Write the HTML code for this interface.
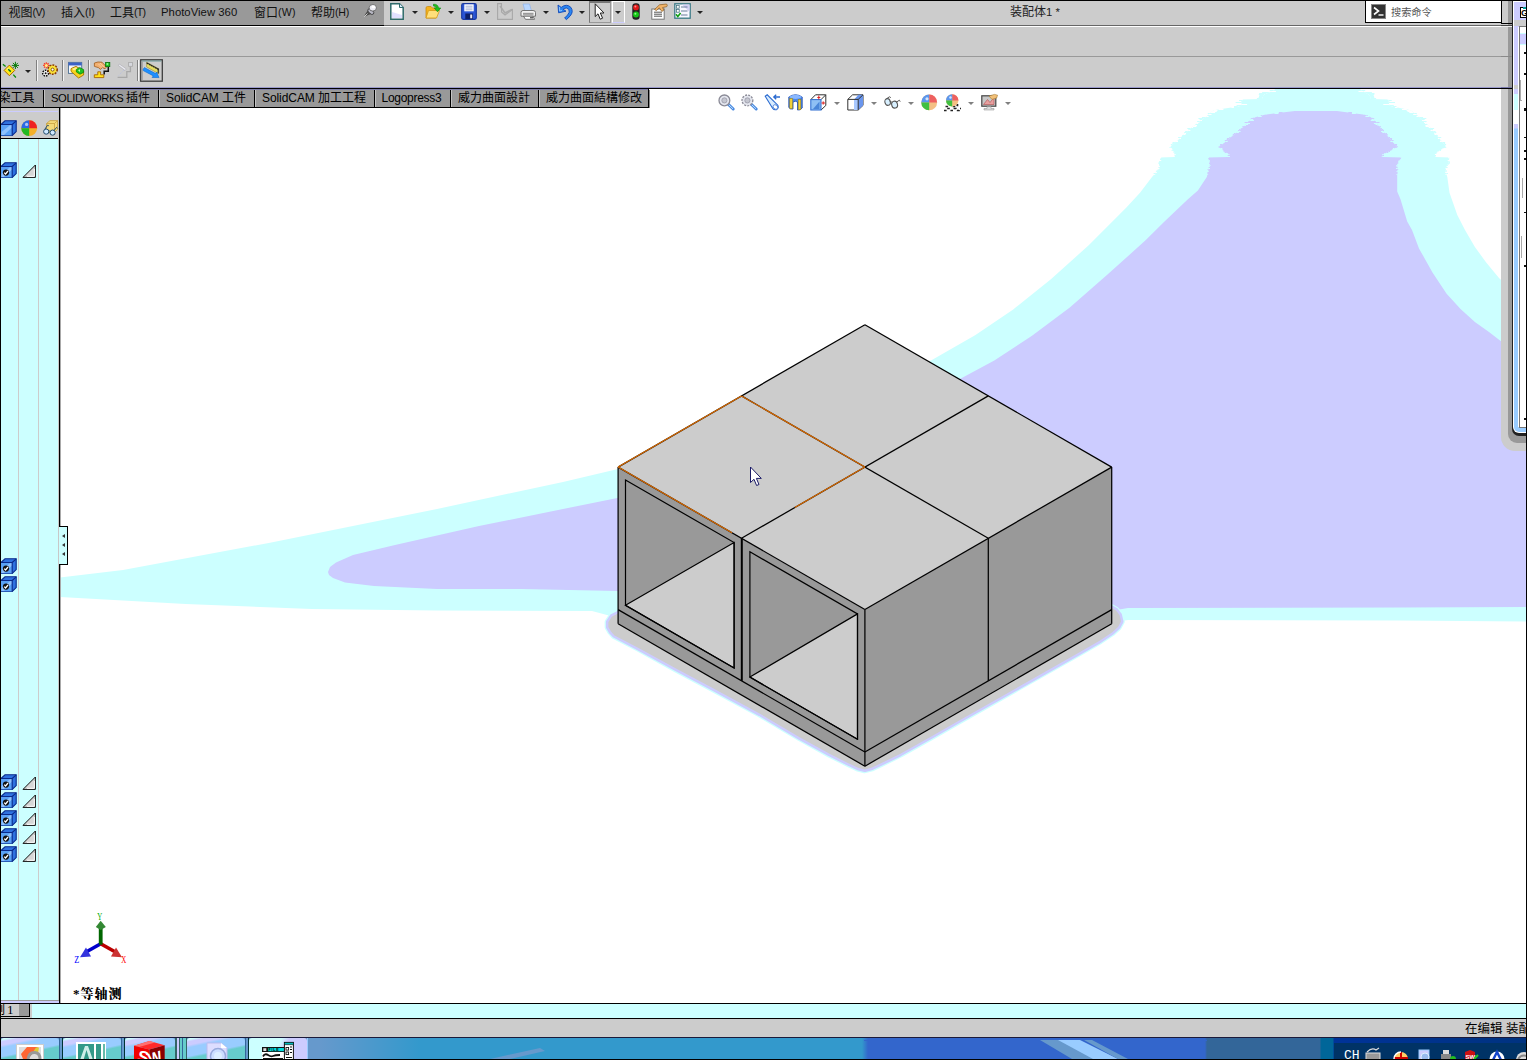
<!DOCTYPE html>
<html lang="zh"><head><meta charset="utf-8"><title>SOLIDWORKS</title><style>
html,body{margin:0;padding:0;background:#fff;}
body{width:1527px;height:1060px;overflow:hidden;position:relative;font-family:"Liberation Sans","Noto Sans CJK SC",sans-serif;font-size:12px;color:#000;}
.a{position:absolute;}
.t{position:absolute;white-space:nowrap;line-height:14px;height:14px;}
.la{font-size:11.3px;}
.ar{position:absolute;width:0;height:0;border-left:3px solid transparent;border-right:3px solid transparent;border-top:3px solid #222;}
.sep{position:absolute;width:1px;background:#808080;border-right:1px solid #f4f4f4;}
.ic{position:absolute;overflow:visible;}
</style></head><body>
<svg id="vp" width="1527" height="1060" viewBox="0 0 1527 1060" style="position:absolute;left:0;top:0" shape-rendering="geometricPrecision">
<polygon points="60.0,577.5 123.0,570.0 270.0,542.7 437.0,509.0 563.0,482.0 618.0,469.0 931.0,360.4 975.5,334.9 1013.2,309.4 1050.9,279.2 1088.7,245.3 1126.4,207.5 1140.0,192.7 1152.0,177.0 1160.0,168.0 1160.0,157.5 1174.5,157.0 1174.5,152.6 1170.0,147.0 1181.0,137.0 1191.0,128.0 1205.7,117.0 1213.5,110.3 1241.0,106.0 1242.4,99.5 1262.0,99.0 1263.6,94.7 1274.7,90.0 1274.7,89.0 1360.4,89.0 1360.4,90.0 1369.4,94.7 1371.0,99.0 1388.3,99.5 1389.4,105.8 1410.5,110.3 1419.5,117.0 1430.6,128.0 1438.4,137.0 1446.2,147.0 1436.0,152.6 1436.0,157.0 1449.5,157.5 1448.4,163.0 1445.0,169.3 1447.3,177.0 1449.5,192.7 1457.3,215.0 1465.0,230.0 1474.9,247.0 1486.2,262.5 1499.0,278.1 1527.0,305.0 1527.0,621.5 1400.0,620.5 1128.0,620.0 1000.0,640.0 700.0,640.0 592.0,611.0 437.0,610.6 311.5,609.0 185.7,604.0 60.0,597.0" fill="#ccffff"/>
<polygon points="328.0,572.0 330.0,567.0 336.0,562.5 353.0,555.0 395.0,545.0 479.0,526.0 563.0,509.0 617.4,498.0 961.3,378.3 994.3,360.4 1032.0,335.8 1069.8,307.5 1107.5,274.5 1145.3,240.6 1164.5,221.6 1187.9,199.3 1197.9,190.4 1206.8,177.0 1210.0,163.7 1208.0,157.5 1229.0,157.0 1229.0,154.8 1219.0,147.0 1231.3,137.0 1242.4,128.0 1252.4,118.0 1264.7,114.7 1294.8,111.0 1337.0,111.0 1364.9,114.7 1372.7,118.0 1380.5,128.0 1388.3,137.0 1397.2,147.0 1382.7,154.8 1382.7,157.0 1401.6,157.5 1397.2,163.7 1397.2,191.5 1400.5,199.3 1407.2,221.6 1412.0,230.0 1419.0,248.4 1432.5,272.5 1446.6,293.7 1460.8,309.3 1474.9,322.0 1489.0,332.0 1499.0,339.7 1527.0,360.0 1527.0,607.0 1400.0,607.5 1128.0,608.0 1000.0,630.0 700.0,630.0 617.4,591.0 521.0,589.0 437.0,589.0 374.0,586.0 345.0,582.5 333.0,578.0 329.0,575.0" fill="#ccccff"/>
<rect x="1269.7" y="90" width="3.8" height="1" fill="#ccffff"/>
<rect x="1361.4" y="90" width="3.8" height="1" fill="#ccffff"/>
<rect x="1271.2" y="91" width="4.7" height="1" fill="#ffffff"/>
<rect x="1358.5" y="91" width="4.7" height="1" fill="#ffffff"/>
<rect x="1262.1" y="92" width="6.7" height="1" fill="#ccffff"/>
<rect x="1365.2" y="92" width="6.7" height="1" fill="#ccffff"/>
<rect x="1259.1" y="93" width="7.4" height="1" fill="#ccffff"/>
<rect x="1367.1" y="93" width="7.4" height="1" fill="#ccffff"/>
<rect x="1258.8" y="94" width="5.3" height="1" fill="#ccffff"/>
<rect x="1369.0" y="94" width="5.3" height="1" fill="#ccffff"/>
<rect x="1259.3" y="95" width="4.0" height="1" fill="#ccffff"/>
<rect x="1369.7" y="95" width="4.0" height="1" fill="#ccffff"/>
<rect x="1259.0" y="96" width="4.0" height="1" fill="#ccffff"/>
<rect x="1370.1" y="96" width="4.0" height="1" fill="#ccffff"/>
<rect x="1258.6" y="97" width="3.9" height="1" fill="#ccffff"/>
<rect x="1370.4" y="97" width="3.9" height="1" fill="#ccffff"/>
<rect x="1256.9" y="98" width="5.3" height="1" fill="#ccffff"/>
<rect x="1370.8" y="98" width="5.3" height="1" fill="#ccffff"/>
<rect x="1242.4" y="99" width="0.6" height="1" fill="#ffffff"/>
<rect x="1387.7" y="99" width="0.6" height="1" fill="#ffffff"/>
<rect x="1239.0" y="100" width="3.2" height="1" fill="#ccffff"/>
<rect x="1388.5" y="100" width="3.2" height="1" fill="#ccffff"/>
<rect x="1241.3" y="101" width="0.7" height="1" fill="#ccffff"/>
<rect x="1388.6" y="101" width="0.7" height="1" fill="#ccffff"/>
<rect x="1235.6" y="102" width="6.2" height="1" fill="#ccffff"/>
<rect x="1388.8" y="102" width="6.2" height="1" fill="#ccffff"/>
<rect x="1241.5" y="103" width="-0.0" height="1" fill="#ffffff"/>
<rect x="1389.0" y="103" width="-0.0" height="1" fill="#ffffff"/>
<rect x="1241.3" y="104" width="5.8" height="1" fill="#ffffff"/>
<rect x="1383.3" y="104" width="5.8" height="1" fill="#ffffff"/>
<rect x="1236.6" y="105" width="4.5" height="1" fill="#ccffff"/>
<rect x="1389.3" y="105" width="4.5" height="1" fill="#ccffff"/>
<rect x="1234.0" y="106" width="3.8" height="1" fill="#ccffff"/>
<rect x="1392.7" y="106" width="3.8" height="1" fill="#ccffff"/>
<rect x="1231.4" y="107" width="2.5" height="1" fill="#ffffff"/>
<rect x="1394.9" y="107" width="2.5" height="1" fill="#ffffff"/>
<rect x="1224.9" y="108" width="0.1" height="1" fill="#ccffff"/>
<rect x="1402.1" y="108" width="0.1" height="1" fill="#ccffff"/>
<rect x="1218.6" y="109" width="4.8" height="1" fill="#ffffff"/>
<rect x="1402.0" y="109" width="4.8" height="1" fill="#ffffff"/>
<rect x="1213.3" y="110" width="4.2" height="1" fill="#ffffff"/>
<rect x="1406.6" y="110" width="4.2" height="1" fill="#ffffff"/>
<rect x="1212.1" y="111" width="4.6" height="1" fill="#ffffff"/>
<rect x="1407.5" y="111" width="4.6" height="1" fill="#ffffff"/>
<rect x="1210.9" y="112" width="4.2" height="1" fill="#ffffff"/>
<rect x="1409.3" y="112" width="4.2" height="1" fill="#ffffff"/>
<rect x="1207.8" y="113" width="2.0" height="1" fill="#ccffff"/>
<rect x="1414.8" y="113" width="2.0" height="1" fill="#ccffff"/>
<rect x="1208.6" y="114" width="2.9" height="1" fill="#ffffff"/>
<rect x="1413.2" y="114" width="2.9" height="1" fill="#ffffff"/>
<rect x="1207.4" y="115" width="-0.0" height="1" fill="#ffffff"/>
<rect x="1417.5" y="115" width="-0.0" height="1" fill="#ffffff"/>
<rect x="1206.3" y="116" width="2.3" height="1" fill="#ffffff"/>
<rect x="1416.5" y="116" width="2.3" height="1" fill="#ffffff"/>
<rect x="1201.9" y="117" width="3.1" height="1" fill="#ccffff"/>
<rect x="1420.0" y="117" width="3.1" height="1" fill="#ccffff"/>
<rect x="1198.4" y="118" width="5.3" height="1" fill="#ccffff"/>
<rect x="1421.0" y="118" width="5.3" height="1" fill="#ccffff"/>
<rect x="1199.6" y="119" width="2.7" height="1" fill="#ccffff"/>
<rect x="1422.0" y="119" width="2.7" height="1" fill="#ccffff"/>
<rect x="1201.0" y="120" width="1.0" height="1" fill="#ffffff"/>
<rect x="1422.1" y="120" width="1.0" height="1" fill="#ffffff"/>
<rect x="1197.1" y="121" width="2.6" height="1" fill="#ccffff"/>
<rect x="1424.0" y="121" width="2.6" height="1" fill="#ccffff"/>
<rect x="1198.3" y="122" width="1.1" height="1" fill="#ffffff"/>
<rect x="1424.0" y="122" width="1.1" height="1" fill="#ffffff"/>
<rect x="1197.0" y="123" width="1.2" height="1" fill="#ffffff"/>
<rect x="1424.9" y="123" width="1.2" height="1" fill="#ffffff"/>
<rect x="1195.4" y="124" width="0.3" height="1" fill="#ccffff"/>
<rect x="1427.1" y="124" width="0.3" height="1" fill="#ccffff"/>
<rect x="1194.3" y="125" width="2.7" height="1" fill="#ffffff"/>
<rect x="1425.4" y="125" width="2.7" height="1" fill="#ffffff"/>
<rect x="1193.0" y="126" width="3.4" height="1" fill="#ffffff"/>
<rect x="1425.6" y="126" width="3.4" height="1" fill="#ffffff"/>
<rect x="1191.7" y="127" width="1.4" height="1" fill="#ffffff"/>
<rect x="1428.7" y="127" width="1.4" height="1" fill="#ffffff"/>
<rect x="1187.3" y="128" width="3.1" height="1" fill="#ccffff"/>
<rect x="1431.0" y="128" width="3.1" height="1" fill="#ccffff"/>
<rect x="1188.4" y="129" width="1.0" height="1" fill="#ccffff"/>
<rect x="1431.9" y="129" width="1.0" height="1" fill="#ccffff"/>
<rect x="1188.2" y="130" width="2.2" height="1" fill="#ffffff"/>
<rect x="1430.6" y="130" width="2.2" height="1" fill="#ffffff"/>
<rect x="1185.1" y="131" width="2.0" height="1" fill="#ccffff"/>
<rect x="1433.6" y="131" width="2.0" height="1" fill="#ccffff"/>
<rect x="1184.2" y="132" width="1.8" height="1" fill="#ccffff"/>
<rect x="1434.5" y="132" width="1.8" height="1" fill="#ccffff"/>
<rect x="1184.9" y="133" width="1.1" height="1" fill="#ffffff"/>
<rect x="1434.3" y="133" width="1.1" height="1" fill="#ffffff"/>
<rect x="1183.8" y="134" width="1.7" height="1" fill="#ffffff"/>
<rect x="1434.5" y="134" width="1.7" height="1" fill="#ffffff"/>
<rect x="1182.0" y="135" width="0.7" height="1" fill="#ccffff"/>
<rect x="1437.1" y="135" width="0.7" height="1" fill="#ccffff"/>
<rect x="1181.6" y="136" width="0.2" height="1" fill="#ffffff"/>
<rect x="1437.8" y="136" width="0.2" height="1" fill="#ffffff"/>
<rect x="1178.1" y="137" width="2.4" height="1" fill="#ccffff"/>
<rect x="1438.8" y="137" width="2.4" height="1" fill="#ccffff"/>
<rect x="1179.3" y="138" width="1.7" height="1" fill="#ffffff"/>
<rect x="1437.9" y="138" width="1.7" height="1" fill="#ffffff"/>
<rect x="1178.2" y="139" width="0.4" height="1" fill="#ffffff"/>
<rect x="1440.0" y="139" width="0.4" height="1" fill="#ffffff"/>
<rect x="1177.2" y="140" width="0.6" height="1" fill="#ffffff"/>
<rect x="1440.5" y="140" width="0.6" height="1" fill="#ffffff"/>
<rect x="1176.0" y="141" width="2.0" height="1" fill="#ffffff"/>
<rect x="1439.9" y="141" width="2.0" height="1" fill="#ffffff"/>
<rect x="1172.5" y="142" width="2.4" height="1" fill="#ccffff"/>
<rect x="1442.7" y="142" width="2.4" height="1" fill="#ccffff"/>
<rect x="1172.3" y="143" width="1.6" height="1" fill="#ccffff"/>
<rect x="1443.5" y="143" width="1.6" height="1" fill="#ccffff"/>
<rect x="1170.8" y="144" width="1.9" height="1" fill="#ccffff"/>
<rect x="1444.2" y="144" width="1.9" height="1" fill="#ccffff"/>
<rect x="1171.3" y="145" width="0.3" height="1" fill="#ccffff"/>
<rect x="1445.0" y="145" width="0.3" height="1" fill="#ccffff"/>
<rect x="1170.5" y="146" width="0.4" height="1" fill="#ffffff"/>
<rect x="1445.4" y="146" width="0.4" height="1" fill="#ffffff"/>
<rect x="1169.5" y="147" width="0.9" height="1" fill="#ccffff"/>
<rect x="1445.3" y="147" width="0.9" height="1" fill="#ccffff"/>
<rect x="1171.2" y="148" width="0.9" height="1" fill="#ffffff"/>
<rect x="1442.6" y="148" width="0.9" height="1" fill="#ffffff"/>
<rect x="1172.0" y="149" width="0.3" height="1" fill="#ffffff"/>
<rect x="1441.3" y="149" width="0.3" height="1" fill="#ffffff"/>
<rect x="1171.6" y="150" width="1.2" height="1" fill="#ccffff"/>
<rect x="1439.8" y="150" width="1.2" height="1" fill="#ccffff"/>
<rect x="1173.3" y="151" width="0.3" height="1" fill="#ccffff"/>
<rect x="1438.0" y="151" width="0.3" height="1" fill="#ccffff"/>
<rect x="1173.5" y="152" width="1.0" height="1" fill="#ccffff"/>
<rect x="1436.2" y="152" width="1.0" height="1" fill="#ccffff"/>
<rect x="1174.0" y="153" width="0.5" height="1" fill="#ccffff"/>
<rect x="1436.0" y="153" width="0.5" height="1" fill="#ccffff"/>
<rect x="1174.5" y="154" width="1.1" height="1" fill="#ffffff"/>
<rect x="1434.9" y="154" width="1.1" height="1" fill="#ffffff"/>
<rect x="1174.5" y="155" width="-0.0" height="1" fill="#ffffff"/>
<rect x="1436.0" y="155" width="-0.0" height="1" fill="#ffffff"/>
<rect x="1174.5" y="156" width="0.5" height="1" fill="#ffffff"/>
<rect x="1435.5" y="156" width="0.5" height="1" fill="#ffffff"/>
<rect x="1160.0" y="157" width="1.2" height="1" fill="#ffffff"/>
<rect x="1448.3" y="157" width="1.2" height="1" fill="#ffffff"/>
<rect x="1160.0" y="158" width="0.5" height="1" fill="#ffffff"/>
<rect x="1448.8" y="158" width="0.5" height="1" fill="#ffffff"/>
<rect x="1160.0" y="159" width="0.0" height="1" fill="#ccffff"/>
<rect x="1449.1" y="159" width="0.0" height="1" fill="#ccffff"/>
<rect x="1160.0" y="160" width="1.2" height="1" fill="#ffffff"/>
<rect x="1447.7" y="160" width="1.2" height="1" fill="#ffffff"/>
<rect x="1159.1" y="161" width="0.9" height="1" fill="#ccffff"/>
<rect x="1448.7" y="161" width="0.9" height="1" fill="#ccffff"/>
<rect x="1158.6" y="162" width="1.4" height="1" fill="#ccffff"/>
<rect x="1448.5" y="162" width="1.4" height="1" fill="#ccffff"/>
<rect x="1158.4" y="163" width="1.6" height="1" fill="#ccffff"/>
<rect x="1448.1" y="163" width="1.6" height="1" fill="#ccffff"/>
<rect x="1159.0" y="164" width="1.0" height="1" fill="#ccffff"/>
<rect x="1447.6" y="164" width="1.0" height="1" fill="#ccffff"/>
<rect x="1159.2" y="165" width="0.8" height="1" fill="#ccffff"/>
<rect x="1447.1" y="165" width="0.8" height="1" fill="#ccffff"/>
<rect x="1159.9" y="166" width="0.1" height="1" fill="#ccffff"/>
<rect x="1446.5" y="166" width="0.1" height="1" fill="#ccffff"/>
<rect x="1158.4" y="167" width="1.6" height="1" fill="#ccffff"/>
<rect x="1446.0" y="167" width="1.6" height="1" fill="#ccffff"/>
<rect x="1159.4" y="168" width="0.2" height="1" fill="#ccffff"/>
<rect x="1445.4" y="168" width="0.2" height="1" fill="#ccffff"/>
<rect x="1157.7" y="169" width="0.9" height="1" fill="#ccffff"/>
<rect x="1445.1" y="169" width="0.9" height="1" fill="#ccffff"/>
<rect x="1156.6" y="170" width="1.2" height="1" fill="#ccffff"/>
<rect x="1445.4" y="170" width="1.2" height="1" fill="#ccffff"/>
<rect x="1155.9" y="171" width="1.0" height="1" fill="#ccffff"/>
<rect x="1445.7" y="171" width="1.0" height="1" fill="#ccffff"/>
<rect x="1156.0" y="172" width="0.8" height="1" fill="#ffffff"/>
<rect x="1445.1" y="172" width="0.8" height="1" fill="#ffffff"/>
<rect x="1153.6" y="173" width="1.6" height="1" fill="#ccffff"/>
<rect x="1446.3" y="173" width="1.6" height="1" fill="#ccffff"/>
<rect x="1154.2" y="174" width="1.0" height="1" fill="#ffffff"/>
<rect x="1445.5" y="174" width="1.0" height="1" fill="#ffffff"/>
<rect x="1278.9" y="112" width="3.7" height="1" fill="#ccccff"/>
<rect x="1348.3" y="112" width="3.7" height="1" fill="#ccccff"/>
<rect x="1274.5" y="113" width="4.0" height="1" fill="#ccffff"/>
<rect x="1351.9" y="113" width="4.0" height="1" fill="#ccffff"/>
<rect x="1266.3" y="114" width="0.2" height="1" fill="#ccffff"/>
<rect x="1363.2" y="114" width="0.2" height="1" fill="#ccffff"/>
<rect x="1260.9" y="115" width="0.8" height="1" fill="#ccccff"/>
<rect x="1366.8" y="115" width="0.8" height="1" fill="#ccccff"/>
<rect x="1258.0" y="116" width="3.7" height="1" fill="#ccffff"/>
<rect x="1365.4" y="116" width="3.7" height="1" fill="#ccffff"/>
<rect x="1254.3" y="117" width="0.5" height="1" fill="#ccffff"/>
<rect x="1371.0" y="117" width="0.5" height="1" fill="#ccffff"/>
<rect x="1250.8" y="118" width="1.1" height="1" fill="#ccccff"/>
<rect x="1373.1" y="118" width="1.1" height="1" fill="#ccccff"/>
<rect x="1250.9" y="119" width="2.3" height="1" fill="#ccffff"/>
<rect x="1371.5" y="119" width="2.3" height="1" fill="#ccffff"/>
<rect x="1249.9" y="120" width="4.0" height="1" fill="#ccffff"/>
<rect x="1370.7" y="120" width="4.0" height="1" fill="#ccffff"/>
<rect x="1248.3" y="121" width="0.6" height="1" fill="#ccccff"/>
<rect x="1375.4" y="121" width="0.6" height="1" fill="#ccccff"/>
<rect x="1244.6" y="122" width="3.3" height="1" fill="#ccccff"/>
<rect x="1376.2" y="122" width="3.3" height="1" fill="#ccccff"/>
<rect x="1246.9" y="123" width="3.1" height="1" fill="#ccffff"/>
<rect x="1373.9" y="123" width="3.1" height="1" fill="#ccffff"/>
<rect x="1245.9" y="124" width="2.2" height="1" fill="#ccffff"/>
<rect x="1375.5" y="124" width="2.2" height="1" fill="#ccffff"/>
<rect x="1244.9" y="125" width="1.0" height="1" fill="#ccffff"/>
<rect x="1377.5" y="125" width="1.0" height="1" fill="#ccffff"/>
<rect x="1242.4" y="126" width="1.5" height="1" fill="#ccccff"/>
<rect x="1379.3" y="126" width="1.5" height="1" fill="#ccccff"/>
<rect x="1242.6" y="127" width="0.3" height="1" fill="#ccccff"/>
<rect x="1380.1" y="127" width="0.3" height="1" fill="#ccccff"/>
<rect x="1240.8" y="128" width="1.0" height="1" fill="#ccccff"/>
<rect x="1380.9" y="128" width="1.0" height="1" fill="#ccccff"/>
<rect x="1239.1" y="129" width="1.4" height="1" fill="#ccccff"/>
<rect x="1381.8" y="129" width="1.4" height="1" fill="#ccccff"/>
<rect x="1238.1" y="130" width="1.2" height="1" fill="#ccccff"/>
<rect x="1382.7" y="130" width="1.2" height="1" fill="#ccccff"/>
<rect x="1238.1" y="131" width="2.5" height="1" fill="#ccffff"/>
<rect x="1381.0" y="131" width="2.5" height="1" fill="#ccffff"/>
<rect x="1236.8" y="132" width="2.1" height="1" fill="#ccffff"/>
<rect x="1382.3" y="132" width="2.1" height="1" fill="#ccffff"/>
<rect x="1233.9" y="133" width="1.7" height="1" fill="#ccccff"/>
<rect x="1385.3" y="133" width="1.7" height="1" fill="#ccccff"/>
<rect x="1232.8" y="134" width="1.6" height="1" fill="#ccccff"/>
<rect x="1386.1" y="134" width="1.6" height="1" fill="#ccccff"/>
<rect x="1232.7" y="135" width="0.5" height="1" fill="#ccccff"/>
<rect x="1387.0" y="135" width="0.5" height="1" fill="#ccccff"/>
<rect x="1231.7" y="136" width="0.2" height="1" fill="#ccccff"/>
<rect x="1387.9" y="136" width="0.2" height="1" fill="#ccccff"/>
<rect x="1229.3" y="137" width="1.3" height="1" fill="#ccccff"/>
<rect x="1388.7" y="137" width="1.3" height="1" fill="#ccccff"/>
<rect x="1226.9" y="138" width="2.5" height="1" fill="#ccccff"/>
<rect x="1389.6" y="138" width="2.5" height="1" fill="#ccccff"/>
<rect x="1226.7" y="139" width="1.5" height="1" fill="#ccccff"/>
<rect x="1390.5" y="139" width="1.5" height="1" fill="#ccccff"/>
<rect x="1224.8" y="140" width="2.2" height="1" fill="#ccccff"/>
<rect x="1391.4" y="140" width="2.2" height="1" fill="#ccccff"/>
<rect x="1225.8" y="141" width="1.9" height="1" fill="#ccffff"/>
<rect x="1390.4" y="141" width="1.9" height="1" fill="#ccffff"/>
<rect x="1224.5" y="142" width="0.3" height="1" fill="#ccffff"/>
<rect x="1392.9" y="142" width="0.3" height="1" fill="#ccffff"/>
<rect x="1223.3" y="143" width="0.1" height="1" fill="#ccffff"/>
<rect x="1394.0" y="143" width="0.1" height="1" fill="#ccffff"/>
<rect x="1220.0" y="144" width="2.1" height="1" fill="#ccccff"/>
<rect x="1395.0" y="144" width="2.1" height="1" fill="#ccccff"/>
<rect x="1219.9" y="145" width="0.9" height="1" fill="#ccccff"/>
<rect x="1395.9" y="145" width="0.9" height="1" fill="#ccccff"/>
<rect x="1218.7" y="146" width="0.9" height="1" fill="#ccccff"/>
<rect x="1396.8" y="146" width="0.9" height="1" fill="#ccccff"/>
<rect x="1218.7" y="147" width="0.9" height="1" fill="#ccccff"/>
<rect x="1396.3" y="147" width="0.9" height="1" fill="#ccccff"/>
<rect x="1220.9" y="148" width="1.5" height="1" fill="#ccffff"/>
<rect x="1392.9" y="148" width="1.5" height="1" fill="#ccffff"/>
<rect x="1222.2" y="149" width="0.4" height="1" fill="#ccffff"/>
<rect x="1392.2" y="149" width="0.4" height="1" fill="#ccffff"/>
<rect x="1222.9" y="150" width="0.5" height="1" fill="#ccccff"/>
<rect x="1390.7" y="150" width="0.5" height="1" fill="#ccccff"/>
<rect x="1223.6" y="151" width="1.2" height="1" fill="#ccccff"/>
<rect x="1388.8" y="151" width="1.2" height="1" fill="#ccccff"/>
<rect x="1224.7" y="152" width="1.3" height="1" fill="#ccccff"/>
<rect x="1387.0" y="152" width="1.3" height="1" fill="#ccccff"/>
<rect x="1227.3" y="153" width="0.8" height="1" fill="#ccffff"/>
<rect x="1384.3" y="153" width="0.8" height="1" fill="#ccffff"/>
<rect x="1228.6" y="154" width="0.9" height="1" fill="#ccffff"/>
<rect x="1382.3" y="154" width="0.9" height="1" fill="#ccffff"/>
<rect x="1227.7" y="155" width="1.3" height="1" fill="#ccccff"/>
<rect x="1382.7" y="155" width="1.3" height="1" fill="#ccccff"/>
<rect x="1229.0" y="156" width="0.9" height="1" fill="#ccffff"/>
<rect x="1381.8" y="156" width="0.9" height="1" fill="#ccffff"/>
<rect x="1208.0" y="157" width="0.9" height="1" fill="#ccffff"/>
<rect x="1400.7" y="157" width="0.9" height="1" fill="#ccffff"/>
<rect x="1208.2" y="158" width="0.1" height="1" fill="#ccccff"/>
<rect x="1400.9" y="158" width="0.1" height="1" fill="#ccccff"/>
<rect x="1208.6" y="159" width="0.2" height="1" fill="#ccffff"/>
<rect x="1399.9" y="159" width="0.2" height="1" fill="#ccffff"/>
<rect x="1209.0" y="160" width="0.8" height="1" fill="#ccffff"/>
<rect x="1398.7" y="160" width="0.8" height="1" fill="#ccffff"/>
<rect x="1209.3" y="161" width="0.7" height="1" fill="#ccffff"/>
<rect x="1398.1" y="161" width="0.7" height="1" fill="#ccffff"/>
<rect x="1209.6" y="162" width="0.1" height="1" fill="#ccccff"/>
<rect x="1398.1" y="162" width="0.1" height="1" fill="#ccccff"/>
<rect x="1209.0" y="163" width="0.9" height="1" fill="#ccccff"/>
<rect x="1397.3" y="163" width="0.9" height="1" fill="#ccccff"/>
<rect x="1209.8" y="164" width="0.1" height="1" fill="#ccffff"/>
<rect x="1397.0" y="164" width="0.1" height="1" fill="#ccffff"/>
<rect x="1209.6" y="165" width="0.9" height="1" fill="#ccffff"/>
<rect x="1396.3" y="165" width="0.9" height="1" fill="#ccffff"/>
<rect x="1209.3" y="166" width="0.7" height="1" fill="#ccffff"/>
<rect x="1396.5" y="166" width="0.7" height="1" fill="#ccffff"/>
<rect x="1208.6" y="167" width="0.5" height="1" fill="#ccccff"/>
<rect x="1397.2" y="167" width="0.5" height="1" fill="#ccccff"/>
<rect x="1208.8" y="168" width="1.2" height="1" fill="#ccffff"/>
<rect x="1396.0" y="168" width="1.2" height="1" fill="#ccffff"/>
<rect x="1207.6" y="169" width="1.0" height="1" fill="#ccccff"/>
<rect x="1397.2" y="169" width="1.0" height="1" fill="#ccccff"/>
<rect x="1208.2" y="170" width="0.2" height="1" fill="#ccccff"/>
<rect x="1397.2" y="170" width="0.2" height="1" fill="#ccccff"/>
<rect x="1208.1" y="171" width="0.7" height="1" fill="#ccffff"/>
<rect x="1396.5" y="171" width="0.7" height="1" fill="#ccffff"/>
<rect x="1207.3" y="172" width="0.5" height="1" fill="#ccccff"/>
<rect x="1397.2" y="172" width="0.5" height="1" fill="#ccccff"/>
<rect x="1207.2" y="173" width="0.4" height="1" fill="#ccccff"/>
<rect x="1397.2" y="173" width="0.4" height="1" fill="#ccccff"/>
<rect x="1207.4" y="174" width="0.7" height="1" fill="#ccffff"/>
<rect x="1396.5" y="174" width="0.7" height="1" fill="#ccffff"/>
<polygon points="640.0,600.0 618.0,613.5 612.0,616.5 608.4,622.0 608.4,627.0 611.0,631.5 614.5,635.4 639.0,648.2 676.0,668.6 712.6,688.1 760.0,713.7 800.0,737.5 830.0,754.1 850.0,764.1 858.0,767.8 864.9,769.5 872.0,767.6 880.0,763.8 900.0,753.9 933.0,735.4 957.0,721.7 1080.0,652.0 1100.0,640.5 1112.0,632.5 1118.0,627.0 1121.0,621.5 1119.5,615.0 1116.0,610.5 1111.7,608.0 1090.0,600.0" fill="#ccffff" stroke="#ccffff" stroke-width="7.5" stroke-linejoin="round"/>
<polygon points="640.0,600.0 618.0,613.5 612.0,616.5 608.4,622.0 608.4,627.0 611.0,631.5 614.5,635.4 639.0,648.2 676.0,668.6 712.6,688.1 760.0,713.7 800.0,737.5 830.0,754.1 850.0,764.1 858.0,767.8 864.9,769.5 872.0,767.6 880.0,763.8 900.0,753.9 933.0,735.4 957.0,721.7 1080.0,652.0 1100.0,640.5 1112.0,632.5 1118.0,627.0 1121.0,621.5 1119.5,615.0 1116.0,610.5 1111.7,608.0 1090.0,600.0" fill="#ccccff" stroke="#ccccff" stroke-width="5" stroke-linejoin="round"/>
<polygon points="640.0,600.0 618.0,613.5 612.0,616.5 608.4,622.0 608.4,627.0 611.0,631.5 614.5,635.4 639.0,648.2 676.0,668.6 712.6,688.1 760.0,713.7 800.0,737.5 830.0,754.1 850.0,764.1 858.0,767.8 864.9,769.5 872.0,767.6 880.0,763.8 900.0,753.9 933.0,735.4 957.0,721.7 1080.0,652.0 1100.0,640.5 1112.0,632.5 1118.0,627.0 1121.0,621.5 1119.5,615.0 1116.0,610.5 1111.7,608.0 1090.0,600.0" fill="#cccccc"/>
<polygon points="864.9,324.7 1111.7,467.1 864.9,609.5 618.1,467.1" fill="#cccccc"/>
<polygon points="618.1,467.1 864.9,609.5 864.9,766.2 618.1,623.8" fill="#999999"/>
<polygon points="864.9,609.5 1111.7,467.1 1111.7,623.8 864.9,766.2" fill="#999999"/>
<polygon points="625.5,605.3 734.1,542.6 734.1,667.9" fill="#cccccc" stroke="#000" stroke-width="1.2"/>
<polygon points="625.5,480.0 734.1,542.6 734.1,667.9 625.5,605.3" fill="none" stroke="#000" stroke-width="1.2"/>
<polygon points="749.9,677.1 857.5,613.9 857.5,739.2" fill="#cccccc" stroke="#000" stroke-width="1.2"/>
<polygon points="749.9,551.8 857.5,613.9 857.5,739.2 749.9,677.1" fill="none" stroke="#000" stroke-width="1.2"/>
<line x1="864.9" y1="324.7" x2="618.1" y2="467.1" stroke="#000" stroke-width="1.25"/>
<line x1="864.9" y1="324.7" x2="1111.7" y2="467.1" stroke="#000" stroke-width="1.25"/>
<line x1="618.1" y1="467.1" x2="864.9" y2="609.5" stroke="#000" stroke-width="1.25"/>
<line x1="1111.7" y1="467.1" x2="864.9" y2="609.5" stroke="#000" stroke-width="1.25"/>
<line x1="741.5" y1="395.9" x2="988.3" y2="538.3" stroke="#000" stroke-width="1.25"/>
<line x1="988.3" y1="395.9" x2="741.5" y2="538.3" stroke="#000" stroke-width="1.25"/>
<line x1="618.1" y1="467.1" x2="618.1" y2="623.8" stroke="#000" stroke-width="1.25"/>
<line x1="864.9" y1="609.5" x2="864.9" y2="766.2" stroke="#000" stroke-width="1.25"/>
<line x1="1111.7" y1="467.1" x2="1111.7" y2="623.8" stroke="#000" stroke-width="1.25"/>
<line x1="988.3" y1="538.3" x2="988.3" y2="680.8" stroke="#000" stroke-width="1.25"/>
<line x1="741.8" y1="538.3" x2="741.8" y2="680.8" stroke="#000" stroke-width="2"/>
<line x1="618.1" y1="609.6" x2="864.9" y2="752.0" stroke="#000" stroke-width="1.25"/>
<line x1="864.9" y1="752.0" x2="1111.7" y2="609.6" stroke="#000" stroke-width="1.25"/>
<line x1="618.1" y1="623.8" x2="864.9" y2="766.2" stroke="#000" stroke-width="1.25"/>
<line x1="864.9" y1="766.2" x2="1111.7" y2="623.8" stroke="#000" stroke-width="1.25"/>
<line x1="618.1" y1="467.1" x2="741.5" y2="395.9" stroke="#d96a00" stroke-width="1.2"/>
<line x1="741.5" y1="395.9" x2="864.9" y2="467.1" stroke="#d96a00" stroke-width="1.2"/>
<line x1="864.9" y1="467.1" x2="794.8" y2="507.6" stroke="#d96a00" stroke-width="1.2"/>
<line x1="618.1" y1="467.1" x2="732.0" y2="532.8" stroke="#d96a00" stroke-width="1.2"/>
<path d="M750.5 467 L750.5 482.5 L754 479.3 L756.6 485.5 L759 484.5 L756.4 478.4 L761.3 478.4 Z" fill="#fff" stroke="#1a1a66" stroke-width="1" stroke-linejoin="miter"/>
<g>
<line x1="100.7" y1="943.7" x2="87.0" y2="951.5" stroke="#0000cc" stroke-width="3.6"/>
<polygon points="80,957.2 86,947.5 91,956.5" fill="#3333dd"/>
<line x1="100.7" y1="943.7" x2="114.5" y2="951.5" stroke="#bb0000" stroke-width="3.6"/>
<polygon points="122,957.2 116,947.5 111,956.5" fill="#cc3333"/>
<line x1="100.7" y1="944.7" x2="100.7" y2="928.0" stroke="#006600" stroke-width="3.8"/>
<polygon points="100.7,920.8 95.8,927 100.7,930 105.8,927" fill="#338833"/>
<text x="99.7" y="920" font-family="Liberation Serif,serif" font-size="10.5" fill="#00aa00" text-anchor="middle" textLength="5" lengthAdjust="spacingAndGlyphs">Y</text>
<text x="76.8" y="963" font-family="Liberation Serif,serif" font-size="10.5" fill="#0000ff" text-anchor="middle" textLength="5" lengthAdjust="spacingAndGlyphs">Z</text>
<text x="123.8" y="963" font-family="Liberation Serif,serif" font-size="10.5" fill="#ff0000" text-anchor="middle" textLength="5" lengthAdjust="spacingAndGlyphs">X</text>
</g>
</svg>
<div class="a" style="left:0px;top:0px;width:1527px;height:1px;background:#000;"></div>
<div class="a" style="left:0px;top:1px;width:384px;height:24px;background:#999999;"></div>
<div class="a" style="left:384px;top:1px;width:1143px;height:24px;background:#cccccc;"></div>
<div class="a" style="left:0px;top:25px;width:384px;height:1px;background:#000;"></div>
<div class="a" style="left:384px;top:25px;width:1143px;height:1px;background:#666;"></div>
<div class="a" style="left:0px;top:26px;width:1527px;height:1px;background:#fff;"></div>
<div class="a" style="left:0px;top:27px;width:1527px;height:29px;background:#cccccc;"></div>
<div class="a" style="left:0px;top:56px;width:1527px;height:1px;background:#999999;"></div>
<div class="a" style="left:0px;top:57px;width:1527px;height:30px;background:#cccccc;"></div>
<div class="a" style="left:0px;top:87px;width:1527px;height:1px;background:#9999cc;"></div>
<div class="a" style="left:0px;top:88px;width:1527px;height:1px;background:#000;"></div>
<div class="t" style="left:8.5px;top:5.6px;color:#111;">视图<span style="font-size:10.6px;letter-spacing:-0.642px;position:relative;top:-1px;">(V)</span></div>
<div class="t" style="left:61px;top:5.6px;color:#111;">插入<span style="font-size:10.6px;letter-spacing:-0.133px;position:relative;top:-1px;">(I)</span></div>
<div class="t" style="left:110px;top:5.6px;color:#111;">工具<span style="font-size:10.6px;letter-spacing:-0.777px;position:relative;top:-1px;">(T)</span></div>
<div class="t" style="left:161px;top:4.6px;color:#111;"><span style="font-size:11.3px;letter-spacing:0.031px;">PhotoView 360</span></div>
<div class="t" style="left:254px;top:5.6px;color:#111;">窗口<span style="font-size:10.6px;letter-spacing:0.179px;position:relative;top:-1px;">(W)</span></div>
<div class="t" style="left:311px;top:5.6px;color:#111;">帮助<span style="font-size:10.6px;letter-spacing:-0.240px;position:relative;top:-1px;">(H)</span></div>
<svg class="ic" style="left:360px;top:1px" width="20" height="22" viewBox="360 1 20 22"><path d="M369 8.5 L374 13 L367 15.6 L364.2 16.8 L365.4 14Z" fill="#4a4a4a"/><path d="M364.2 16.8 L367.5 13.5" stroke="#ddd" stroke-width=".9"/><ellipse cx="370.8" cy="11.6" rx="3.6" ry="2" transform="rotate(42 370.8 11.6)" fill="#b8b8c4" stroke="#444" stroke-width=".9"/><ellipse cx="372.8" cy="7.8" rx="3.7" ry="3.3" fill="#ececf4" stroke="#666" stroke-width=".9"/><ellipse cx="373.4" cy="6.9" rx="1.8" ry="1.4" fill="#fff"/></svg>
<div class="t" style="left:1010px;top:5px;color:#222;">装配体<span class="la">1 *</span></div>
<div class="a" style="left:1365px;top:1px;width:137px;height:22px;background:#fff;border:1px solid #000;border-top:none;box-sizing:border-box;"></div>
<svg class="ic" style="left:1371px;top:4px" width="15" height="15" viewBox="0 0 15 15"><rect x="0.5" y="0.5" width="14" height="14" fill="#333" stroke="#888"/><path d="M3 3.5 L7.5 7 L3 10.5" stroke="#fff" stroke-width="1.6" fill="none"/><path d="M7.5 11 H12.5" stroke="#fff" stroke-width="1.4"/></svg>
<div class="t" style="left:1391px;top:5.5px;font-size:10.2px;color:#555;">搜索命令</div>
<div class="a" style="left:1502px;top:1px;width:6px;height:24px;background:#cccccc;"></div>
<div class="a" style="left:1508px;top:1px;width:4px;height:87px;background:#999999;"></div>
<div class="a" style="left:1502px;top:23px;width:10px;height:1px;background:#000;"></div>
<div class="a" style="left:1502px;top:24px;width:10px;height:1px;background:#ccc;"></div>
<svg class="ic" style="left:389.5px;top:2.5px" width="14" height="17" viewBox="0 0 14 17"><path d="M0.8 0.8 H9.5 L13.2 4.5 V16.2 H0.8 Z" fill="#fff" stroke="#2f6a6a" stroke-width="1.5"/><path d="M9.5 0.8 V4.5 H13.2" fill="#ddeeff" stroke="#2f6a6a" stroke-width="1"/><path d="M2 9 L12 12 V15 H2Z" fill="#ccccff" opacity=".6"/></svg>
<div class="ar" style="left:412px;top:11px;border-top-color:#222"></div>
<svg class="ic" style="left:424.5px;top:2.5px" width="17" height="17" viewBox="0 0 17 17"><path d="M1 5 Q1 3.5 2.5 3.5 H6 L7.5 5 H11 V15 H1 Z" fill="#f5b21c" stroke="#c98a10" stroke-width=".8"/><path d="M1 15 L3.5 7.5 H14.5 L11.5 15 Z" fill="#ffdf7a" stroke="#d59a17" stroke-width=".8"/><path d="M8.5 1.2 Q13 1 13.5 5 H15.8 L12.5 8.8 L9.2 5 H11.4 Q11 3 8.5 3 Z" fill="#1fc01f" stroke="#0a8a0a" stroke-width=".6"/></svg>
<div class="ar" style="left:448px;top:11px;border-top-color:#222"></div>
<svg class="ic" style="left:461px;top:2.5px" width="16" height="17" viewBox="0 0 16 17"><rect x="0.7" y="0.7" width="14.6" height="15.6" rx="1.5" fill="#2b55d4" stroke="#1b3aa0" stroke-width="1.2"/><rect x="3.3" y="1.3" width="9.4" height="7" fill="#fff"/><path d="M4.5 3.2H11.5M4.5 5H11.5M4.5 6.8H11.5" stroke="#8a9ac8" stroke-width=".8"/><rect x="4.3" y="10.5" width="7.6" height="5.6" fill="#0d1f66"/><rect x="9.2" y="11.5" width="2" height="3.8" fill="#e8e8f4"/></svg>
<div class="ar" style="left:484px;top:11px;border-top-color:#222"></div>
<svg class="ic" style="left:497px;top:2.5px" width="16" height="17" viewBox="0 0 16 17"><path d="M0.6 0.6 H4.5 V9 L8 12 L15.4 6.5 V16.4 H0.6 Z" fill="none" stroke="#a8a8a8" stroke-width="1.1"/><path d="M3 3 L8 10 L15 6.5" fill="none" stroke="#aaa" stroke-width="1.6"/></svg>
<svg class="ic" style="left:519.5px;top:2.5px" width="17" height="17" viewBox="0 0 17 17"><path d="M3 1 H9.5 L11.5 8 H5 Z" fill="#b9d7ff" stroke="#8fb2e8" stroke-width=".7"/><path d="M1 9.5 Q1 7.5 3 7.5 H13 Q15.5 7.5 15.5 9.5 V13.2 H1 Z" fill="#f2f2f2" stroke="#666" stroke-width=".9"/><rect x="3" y="9.8" width="10.5" height="2" fill="#9a9a9a"/><path d="M3.5 13.2 H13 L14.5 16.3 H5.5 Z" fill="#fff" stroke="#555" stroke-width=".8"/><rect x="10" y="14.3" width="3" height="1" fill="#222"/></svg>
<div class="ar" style="left:543px;top:11px;border-top-color:#222"></div>
<svg class="ic" style="left:556px;top:2.5px" width="17" height="17" viewBox="0 0 17 17"><path d="M2 2 L2.6 9.8 L10 8.2 L7 6.3 Q10.5 3.5 12.8 6.3 Q14.3 9.2 11.6 12 L8.6 15 L10.5 16.6 L14 13.2 Q18 8.5 14.8 4.3 Q10.6 0.2 5.2 4.4 Z" fill="#2b86f2" stroke="#1148b8" stroke-width=".9" stroke-linejoin="round"/><path d="M3.5 4 L3.6 8 L6 7.5" stroke="#a8d4ff" stroke-width=".8" fill="none"/></svg>
<div class="ar" style="left:579px;top:11px;border-top-color:#222"></div>
<div class="a" style="left:589px;top:1px;width:22px;height:22px;background:#cccccc;box-sizing:border-box;border:1px solid #999;border-top:2px solid #777;border-left:1.5px solid #777;"></div>
<svg class="ic" style="left:594px;top:3px" width="11" height="18" viewBox="0 0 11 18"><path d="M1.2 0.8 L1.2 13.6 L4 10.8 L6.2 16.2 L8.6 15.2 L6.3 10 L10 10 Z" fill="#fff" stroke="#222" stroke-width="1"/></svg>
<div class="a" style="left:611.5px;top:1px;width:13px;height:22px;background:#cccccc;box-sizing:border-box;border:1px solid #fff;border-bottom-color:#ccccff;"></div>
<div class="ar" style="left:615px;top:11px;border-top-color:#222"></div>
<svg class="ic" style="left:632px;top:2.5px" width="8" height="17" viewBox="0 0 8 17"><rect x="0.3" y="0.3" width="7.4" height="16.4" rx="3.2" fill="#222"/><circle cx="4" cy="4.4" r="2.9" fill="#e01818"/><circle cx="3.4" cy="3.6" r="1" fill="#ff8a8a"/><circle cx="4" cy="11.6" r="3" fill="#16c416"/><circle cx="3.4" cy="10.8" r="1" fill="#8aff8a"/></svg>
<svg class="ic" style="left:651px;top:2.5px" width="17" height="17" viewBox="0 0 17 17"><rect x="0.8" y="6" width="12.4" height="10.2" fill="#fff" stroke="#777" stroke-width="1"/><path d="M3 9.2H11M3 11.2H11M3 13.2H11" stroke="#555" stroke-width="1"/><path d="M3.5 6.5 L8.5 1.8 L15.5 1 Q17 2 15.8 3.6 L11.5 4.6 L13 7 L10.8 8.4 L8.3 4.8 L5.4 7.6 Z" fill="#f1b46a" stroke="#8a5a20" stroke-width=".7"/></svg>
<svg class="ic" style="left:674px;top:3px" width="17" height="16" viewBox="0 0 17 16"><rect x="0.8" y="0.8" width="15.4" height="14.4" fill="#f7f7ff" stroke="#3a7a86" stroke-width="1.3"/><path d="M8 1.5 L15.5 1.5 L15.5 9 Z" fill="#d5d0f5"/><rect x="2.6" y="2.6" width="2.6" height="2.6" fill="#fff" stroke="#3a6a76" stroke-width=".7"/><rect x="2.6" y="6.6" width="2.6" height="2.6" fill="#fff" stroke="#3a6a76" stroke-width=".7"/><path d="M7 4H13.5M7 8H13.5M7 12H13.5" stroke="#5a7090" stroke-width=".9"/><path d="M2 11.3 L3.8 13.4 L6.6 10" stroke="#0fa00f" stroke-width="1.6" fill="none"/></svg>
<div class="ar" style="left:696.5px;top:11px;border-top-color:#222"></div>
<svg class="ic" style="left:0px;top:58px" width="165" height="26" viewBox="0 58 165 26"><path d="M4.1 70.4 L9.4 65.1 L14.7 70.4 L9.4 75.7Z" fill="#ffe81a" stroke="#a86400" stroke-width="1"/><path d="M6.2 69 L9.2 71.8 L11 70.2 L8 67.4Z" fill="#fff36a"/><path d="M8.2 69.2 L10.8 71.6" stroke="#0a7a0a" stroke-width="1.5"/><path d="M2.9 64.2 L5.6 66.6 M13.3 74.6 L15.9 77.5" stroke="#0a8a0a" stroke-width="1.3"/><path d="M15.4 61.8 V69 M11.8 65.4 H19 M12.9 62.9 L17.9 67.9 M17.9 62.9 L12.9 67.9" stroke="#0a7a0a" stroke-width="1"/><path d="M46.3 62.2 V68.6 M43.1 65.4 H49.5 M44 63.1 L48.6 67.7 M48.6 63.1 L44 67.7" stroke="#ff3a1a" stroke-width="1.1"/><circle cx="46.3" cy="65.4" r="1.5" fill="#ffee88"/><circle cx="45.6" cy="73.2" r="2.9" fill="#fff" stroke="#111" stroke-width="1.5" stroke-dasharray="1.6 0.9"/><circle cx="45.6" cy="73.2" r="1" fill="#111"/><circle cx="52.6" cy="69.6" r="4.3" fill="#f8d21a" stroke="#8a3a00" stroke-width="2.2" stroke-dasharray="1.7 1.1"/><circle cx="52.6" cy="69.6" r="3.8" fill="#fbe23a"/><circle cx="52.6" cy="69.6" r="1.5" fill="#fff" stroke="#7a4a00" stroke-width=".9"/><rect x="68.5" y="62.4" width="13.2" height="11" fill="#e8ecf8" stroke="#5a7a9a" stroke-width="1"/><rect x="68.5" y="62.6" width="13.2" height="2.8" fill="#3a62c8"/><rect x="69.4" y="66.5" width="3" height="6" fill="#fff"/><path d="M71 68.6 L76 66.4 L83.6 71 V75 L78.6 78 L71 71.4Z" fill="#f6d21e" stroke="#a87400" stroke-width=".9"/><path d="M72 68.8 L76 67.2 L78 68.6 L74 70.4Z" fill="#fff08a"/><path d="M76.4 69.4 L79.6 67.4 L83.6 69.6 V72.4 L80 74.2 L76.4 72Z" fill="#1fc41f" stroke="#0a7a0a" stroke-width=".7"/><path d="M78 70.2 L80 69.2 V72 Z" fill="#b8ffb8"/><path d="M94.4 63 L98 62 L102 62.2 L106.6 67 L105 68.8 L102.4 67.6 L100.4 69.4 L98.4 67.6 L94.4 66.4Z" fill="#f2b070" stroke="#a05a1a" stroke-width=".8"/><path d="M99 64.5 L102.5 68 M100.5 63.5 L104 67" stroke="#fff" stroke-width=".7" stroke-dasharray=".8 .8"/><rect x="105.6" y="62.4" width="4.2" height="4.2" fill="#22cc22" stroke="#0a6a0a" stroke-width=".8"/><rect x="106.6" y="63.3" width="1.6" height="1.4" fill="#b8ffb8"/><path d="M108.3 66.9 V71.3 H104.2 V74.5" stroke="#111" stroke-width="1.5" fill="none"/><path d="M97.8 71.8 H100.6 V74.8 H103.8 V77.6 H94.3 V74.8 H97.8Z" fill="#ffe21a" stroke="#a86400" stroke-width=".9"/><rect x="128.6" y="62.5" width="3.8" height="3.8" fill="#d6d8de" stroke="#a8a8a8" stroke-width=".8"/><path d="M130.4 66.6 V71.6 H126.8 V77.3 H117.6" stroke="#a8a8a8" stroke-width="1.3" fill="none"/><path d="M119.4 64 L126.4 68.9 L125 70.6 L118.4 65.6Z" fill="#e8e8ee" stroke="#b0b0b8" stroke-width=".7"/><path d="M124 70 L117.8 76.4" stroke="#b8c0e0" stroke-width=".9" stroke-dasharray="1.2 1"/><rect x="140.7" y="59.8" width="21.6" height="21.4" fill="#cdcdcd" stroke="#3c3c3c" stroke-width="1.3"/><path d="M141.6 61 H161.4" stroke="#6a9a9a" stroke-width="1"/><path d="M142 61.6 V80.4" stroke="#999" stroke-width="1.4"/><path d="M146.6 62.2 L158.7 68.7 V73.7 L146.6 66.9Z" fill="#e4dc62" stroke="#8a8430" stroke-width=".5"/><path d="M146.6 62.2 L158.7 68.7 V70.2 L146.6 63.7Z" fill="#222"/><path d="M148.2 64.3 v1.6 M150.2 65.4 v1.6 M152.2 66.5 v1.6 M154.2 67.6 v1.6 M156.2 68.7 v1.6" stroke="#e4dc62" stroke-width="1.1"/><path d="M158.2 68.6 V73.4" stroke="#222" stroke-width="1"/><path d="M143.2 69.2 L144.4 67.6 L155.6 73.6 L156.6 72 L159 77.6 L152 77.4 L153.4 75.9 L143.2 70.6Z" fill="#1e90ff" stroke="#0a6ad0" stroke-width=".6"/></svg>
<div class="ar" style="left:25.4px;top:70px;border-top-color:#222"></div>
<div class="sep" style="left:36px;top:60px;height:21px"></div>
<div class="sep" style="left:62px;top:60px;height:21px"></div>
<div class="sep" style="left:88px;top:60px;height:21px"></div>
<div class="sep" style="left:137px;top:60px;height:21px"></div>
<div class="a" style="left:0px;top:89px;width:649px;height:18px;background:#999999;"></div>
<div class="a" style="left:0px;top:89px;width:649px;height:1px;background:#7f7fa8;"></div>
<div class="a" style="left:0px;top:107px;width:650px;height:1px;background:#000;"></div>
<div class="a" style="left:648px;top:89px;width:1px;height:19px;background:#000;"></div>
<div class="a" style="left:649px;top:90px;width:1px;height:18px;background:#888;"></div>
<div class="a" style="left:43px;top:90px;width:1px;height:17px;background:#000;"></div>
<div class="a" style="left:44px;top:90px;width:1px;height:17px;background:#c4c4c4;"></div>
<div class="a" style="left:158px;top:90px;width:1px;height:17px;background:#000;"></div>
<div class="a" style="left:159px;top:90px;width:1px;height:17px;background:#c4c4c4;"></div>
<div class="a" style="left:254px;top:90px;width:1px;height:17px;background:#000;"></div>
<div class="a" style="left:255px;top:90px;width:1px;height:17px;background:#c4c4c4;"></div>
<div class="a" style="left:374px;top:90px;width:1px;height:17px;background:#000;"></div>
<div class="a" style="left:375px;top:90px;width:1px;height:17px;background:#c4c4c4;"></div>
<div class="a" style="left:450px;top:90px;width:1px;height:17px;background:#000;"></div>
<div class="a" style="left:451px;top:90px;width:1px;height:17px;background:#c4c4c4;"></div>
<div class="a" style="left:538px;top:90px;width:1px;height:17px;background:#000;"></div>
<div class="a" style="left:539px;top:90px;width:1px;height:17px;background:#c4c4c4;"></div>
<div class="t" style="left:-1.5px;top:91px;color:#000;">染工具</div>
<div class="t" style="left:51px;top:91px;color:#000;"><span style="font-size:11.2px;letter-spacing:-0.359px;">SOLIDWORKS </span>插件</div>
<div class="t" style="left:166px;top:91px;color:#000;"><span style="font-size:12px;letter-spacing:-0.076px;">SolidCAM </span>工件</div>
<div class="t" style="left:262px;top:91px;color:#000;"><span style="font-size:12px;letter-spacing:-0.076px;">SolidCAM </span>加工工程</div>
<div class="t" style="left:381.6px;top:91px;color:#000;"><span style="font-size:12px;letter-spacing:-0.292px;">Logopress3</span></div>
<div class="t" style="left:458px;top:91px;font-family:'Liberation Sans','Noto Sans CJK TC',sans-serif">威力曲面設計</div>
<div class="t" style="left:546px;top:91px;font-family:'Liberation Sans','Noto Sans CJK TC',sans-serif">威力曲面結構修改</div>
<svg class="ic" style="left:717.5px;top:93.5px" width="17" height="17" viewBox="0 0 17 17"><path d="M10 10 L15.2 15" stroke="#4a8ae0" stroke-width="3" stroke-linecap="round"/><path d="M10.5 10.5 L15 14.8" stroke="#bfe0ff" stroke-width="1"/><circle cx="6.4" cy="6.4" r="5.4" fill="#e4e6ee" stroke="#8a8a96" stroke-width="1.3" /><circle cx="6.4" cy="6.4" r="2.6" fill="#c4c6d0" stroke="#9a9aa8" stroke-width=".8"/></svg>
<svg class="ic" style="left:740.5px;top:93.5px" width="17" height="17" viewBox="0 0 17 17"><path d="M10 10 L15.2 15" stroke="#4a8ae0" stroke-width="3" stroke-linecap="round"/><path d="M10.5 10.5 L15 14.8" stroke="#bfe0ff" stroke-width="1"/><circle cx="6.4" cy="6.4" r="5.4" fill="#e4e6ee" stroke="#8a8a96" stroke-width="1.3" stroke-dasharray="2 1.2"/><circle cx="6.4" cy="6.4" r="2.6" fill="#c4c6d0" stroke="#9a9aa8" stroke-width=".8"/></svg>
<svg class="ic" style="left:764px;top:93.5px" width="17" height="17" viewBox="0 0 17 17"><path d="M1.2 2.2 L3.2 0.8 L13.8 11.2 Q15 14 12.6 15.6 Q10 16.4 8.6 14.2 Z" fill="#d8ecff" stroke="#2a6ad0" stroke-width="1.1"/><ellipse cx="11.4" cy="13" rx="2.6" ry="2" fill="#fff" stroke="#2a6ad0" stroke-width=".7" transform="rotate(40 11.4 13)"/><path d="M16 3 H10 M12.2 0.8 L9.8 3 L12.2 5.2" stroke="#2a6ad0" stroke-width="1.3" fill="none"/></svg>
<svg class="ic" style="left:788px;top:93.5px" width="15" height="17" viewBox="0 0 15 17"><path d="M0.8 3 Q7.5 -1.5 14.2 3 V14 Q12.5 16.5 9.5 16 V8 Q7.5 6.5 5 8 V15 Q2 15.5 0.8 13.5 Z" fill="#4a86e8" stroke="#1a46a8" stroke-width=".8"/><path d="M0.8 3 Q7.5 7 14.2 3 Q7.5 -1.5 0.8 3Z" fill="#8ab8ff"/><rect x="1.8" y="4.6" width="2.6" height="10" fill="#f2d23a" stroke="#a08000" stroke-width=".5"/><rect x="10.2" y="5.6" width="2.6" height="10" fill="#f2d23a" stroke="#a08000" stroke-width=".5"/></svg>
<svg class="ic" style="left:810px;top:93.5px" width="17" height="17" viewBox="0 0 17 17"><path d="M5.5 0.8 H15.8 V11.5 L11 16 M15.8 0.8 L11 5.6 M5.5 0.8 L0.8 5.6" fill="none" stroke="#333" stroke-width="1"/><rect x="0.8" y="5.6" width="10.2" height="10.4" fill="#8fc0f4" stroke="#2a6ad0" stroke-width="1"/><path d="M3 15 L9.5 7.5 V15Z" fill="#4a86d8"/><path d="M8.8 1.5 V5.5 M7.3 3.5H10.3 M11.5 9 H15 M13.2 7.4 V10.6" stroke="#e02020" stroke-width="1"/></svg>
<div class="ar" style="left:834px;top:102px;border-top-color:#808080"></div>
<svg class="ic" style="left:847px;top:93.5px" width="17" height="17" viewBox="0 0 17 17"><path d="M0.8 5.4 L5.6 0.8 H16 V11.4 L11.2 16 H0.8 Z" fill="#fff" stroke="#333" stroke-width="1"/><path d="M7 5.4 L11.5 0.8 H16 V11.4 L11.2 16 H7 Z" fill="#6a96ee"/><path d="M7 5.4 H11.2 V16 H7Z" fill="#a8c8ff"/><path d="M0.8 5.4 H11.2 V16 M11.2 5.4 L16 0.8" fill="none" stroke="#333" stroke-width="1"/></svg>
<div class="ar" style="left:871px;top:102px;border-top-color:#808080"></div>
<svg class="ic" style="left:884px;top:96px" width="17" height="13" viewBox="0 0 17 13"><ellipse cx="3.6" cy="6" rx="2.7" ry="3.4" fill="#d8f0ff" stroke="#555" stroke-width="1.1" transform="rotate(-15 3.6 6)"/><ellipse cx="10.6" cy="8.6" rx="2.9" ry="3.5" fill="#d8f0ff" stroke="#555" stroke-width="1.1" transform="rotate(-15 10.6 8.6)"/><path d="M5.8 5.4 Q7 4.6 8 6.6 M2.2 3 L5.4 0.8 L6.8 1.6 M12.6 6 L15.4 4.2 L16.2 5.6" fill="none" stroke="#555" stroke-width="1"/></svg>
<div class="ar" style="left:908px;top:102px;border-top-color:#808080"></div>
<svg class="ic" style="left:921px;top:93.5px" width="17" height="17" viewBox="0 0 17 17"><circle cx="8.2" cy="8.4" r="7.9" fill="#f4c084"/><path d="M8.2 8.4 V0.5 A7.9 7.9 0 0 1 16.1 8.4 Z" fill="#ee6060"/><path d="M8.2 8.4 H0.3 A7.9 7.9 0 0 1 8.2 0.5 Z" fill="#5a96ee"/><path d="M8.2 8.4 V16.3 A7.9 7.9 0 0 1 0.3 8.4 Z" fill="#40c040"/><circle cx="5.988" cy="4.845" r="1.58" fill="#fff" opacity=".75"/></svg>
<svg class="ic" style="left:944px;top:93.5px" width="17" height="17" viewBox="0 0 17 17"><path d="M0 13 L3 10 H14 L17 13 V16.5 H0Z" fill="#fff"/><path d="M0 16.5 h3 v-2 h3 v2 h3 v-2 h3 v2 h3 v-2 h2 M1.5 12.5 h3 v-1.6 h3 v1.6 h3 v-1.6 h3 v1.6" stroke="#222" stroke-width="1.6" fill="none" stroke-dasharray="2.6 2.6"/><circle cx="8.2" cy="6.4" r="6.2" fill="#f4c084"/><path d="M8.2 6.4 V0.2 A6.2 6.2 0 0 1 14.4 6.4 Z" fill="#ee6060"/><path d="M8.2 6.4 H2 A6.2 6.2 0 0 1 8.2 0.2 Z" fill="#5a96ee"/><path d="M8.2 6.4 V12.6 A6.2 6.2 0 0 1 2 6.4 Z" fill="#40c040"/><circle cx="6.464" cy="3.61" r="1.24" fill="#fff" opacity=".75"/></svg>
<div class="ar" style="left:967.7px;top:102px;border-top-color:#808080"></div>
<svg class="ic" style="left:980.5px;top:93.5px" width="17" height="17" viewBox="0 0 17 17"><rect x="0.8" y="1.8" width="14" height="10.4" fill="#c8c8c8" stroke="#444" stroke-width="1.2"/><path d="M2.5 10.5 L6.5 5.5 L9 8.5 L13 3.5 V10.5Z" fill="#e8a0a0" stroke="#b04a4a" stroke-width=".6"/><path d="M8 2 L13.5 0.4 L16.6 1.2 L15.6 4 L11 5.4Z" fill="#f2c078" stroke="#a87a30" stroke-width=".6"/><path d="M6 12.5 H10 V14.5 H13 V16 H3 V14.5 H6Z" fill="#ddd" stroke="#888" stroke-width=".5"/></svg>
<div class="ar" style="left:1005px;top:102px;border-top-color:#808080"></div>
<div class="a" style="left:0px;top:108px;width:59px;height:31px;background:#cccccc;"></div>
<div class="a" style="left:0px;top:111px;width:58px;height:1px;background:#ccccff;"></div>
<div class="a" style="left:0px;top:138px;width:58px;height:1px;background:#000;"></div>
<div class="a" style="left:0px;top:139px;width:59px;height:861px;background:#ccffff;"></div>
<div class="a" style="left:18px;top:139px;width:1px;height:861px;background:#cccccc;"></div>
<div class="a" style="left:38px;top:139px;width:1px;height:861px;background:#cccccc;"></div>
<div class="a" style="left:58px;top:109px;width:1px;height:892px;background:#c8c8c8;"></div>
<div class="a" style="left:0px;top:1000px;width:59px;height:1px;background:#999;"></div>
<div class="a" style="left:0px;top:1001px;width:59px;height:2px;background:#ccccff;"></div>
<div class="a" style="left:59px;top:108px;width:1px;height:895px;background:#000;"></div>
<div class="a" style="left:60px;top:108px;width:1px;height:895px;background:#aaaaaa;"></div>
<svg class="ic" style="left:0.5px;top:120px" width="16" height="16" viewBox="0 0 16 16"><path d="M0 4.5 L4 0.8 H15.2 V11.6 L11.2 15.4 H0Z" fill="#2f72e0" stroke="#0a2a8a" stroke-width="1.1"/><path d="M0 4.5 H11.2 V15.4 H0Z" fill="#5aa2f6"/><path d="M0.5 12 L9 5.2 L11 5.2 V7.5 L3 15 H0.5Z" fill="#9ccaff" opacity=".8"/><path d="M0 4.5 H11.2 V15.4 M11.2 4.5 L15.2 0.8" fill="none" stroke="#0a2a8a" stroke-width="1.1"/></svg>
<svg class="ic" style="left:21px;top:120px" width="17" height="17" viewBox="0 0 17 17"><circle cx="8.2" cy="8.2" r="7.9" fill="#f4b02a"/><path d="M8.2 8.2 V0.3 A7.9 7.9 0 0 1 16.1 8.2Z" fill="#ee2222"/><path d="M8.2 8.2 H0.3 A7.9 7.9 0 0 1 8.2 0.3Z" fill="#2a6ae6"/><path d="M8.2 8.2 V16.1 A7.9 7.9 0 0 1 0.3 8.2Z" fill="#22b822"/><circle cx="5.6" cy="4.4" r="1.6" fill="#fff" opacity=".6"/></svg>
<svg class="ic" style="left:43px;top:120px" width="16" height="16" viewBox="0 0 16 16"><path d="M3.5 3.5 L7 0.6 H14.5 V9.5 L11.5 12.5 H3.5Z" fill="#f2d878" stroke="#c8a040" stroke-width=".8"/><path d="M3.5 3.5 H11.5 V12.5 M11.5 3.5 L14.5 0.6" fill="none" stroke="#c8a040" stroke-width=".8"/><circle cx="3.2" cy="11.6" r="2.6" fill="#cfe8ff" stroke="#224a6a" stroke-width="1"/><circle cx="9.6" cy="12.6" r="2.6" fill="#cfe8ff" stroke="#224a6a" stroke-width="1"/><path d="M5.6 11 Q6.4 10.2 7.2 11.6 M2 9 L4.6 5.2 L5.8 5.8 M11.2 10.4 L13.6 7.4 L14.6 8.4" stroke="#224a6a" stroke-width="1" fill="none"/></svg>
<svg class="ic" style="left:0.5px;top:162px" width="16" height="16" viewBox="0 0 16 16"><path d="M0 4.5 L4 0.8 H15.2 V11.6 L11.2 15.4 H0Z" fill="#2f72e0" stroke="#0a2a8a" stroke-width="1.1"/><path d="M0 4.5 H11.2 V15.4 H0Z" fill="#5aa2f6"/><path d="M0.5 12 L9 5.2 L11 5.2 V7.5 L3 15 H0.5Z" fill="#9ccaff" opacity=".8"/><path d="M0 4.5 H11.2 V15.4 M11.2 4.5 L15.2 0.8" fill="none" stroke="#0a2a8a" stroke-width="1.1"/><circle cx="5" cy="10.6" r="3.1" fill="#111"/><path d="M3.2 10.6 L4.6 12 L7 9" stroke="#fff" stroke-width="1.3" fill="none"/></svg>
<svg class="ic" style="left:22px;top:163.5px" width="15" height="15" viewBox="0 0 15 15"><path d="M13.4 1 V13.4 H1 Z" fill="#d6d6d6" stroke="#111" stroke-width="1"/><path d="M12.3 5 V12.3 H5" stroke="#fff" stroke-width="1" fill="none"/></svg>
<svg class="ic" style="left:0.5px;top:774px" width="16" height="16" viewBox="0 0 16 16"><path d="M0 4.5 L4 0.8 H15.2 V11.6 L11.2 15.4 H0Z" fill="#2f72e0" stroke="#0a2a8a" stroke-width="1.1"/><path d="M0 4.5 H11.2 V15.4 H0Z" fill="#5aa2f6"/><path d="M0.5 12 L9 5.2 L11 5.2 V7.5 L3 15 H0.5Z" fill="#9ccaff" opacity=".8"/><path d="M0 4.5 H11.2 V15.4 M11.2 4.5 L15.2 0.8" fill="none" stroke="#0a2a8a" stroke-width="1.1"/><circle cx="5" cy="10.6" r="3.1" fill="#111"/><path d="M3.2 10.6 L4.6 12 L7 9" stroke="#fff" stroke-width="1.3" fill="none"/></svg>
<svg class="ic" style="left:22px;top:775.5px" width="15" height="15" viewBox="0 0 15 15"><path d="M13.4 1 V13.4 H1 Z" fill="#d6d6d6" stroke="#111" stroke-width="1"/><path d="M12.3 5 V12.3 H5" stroke="#fff" stroke-width="1" fill="none"/></svg>
<svg class="ic" style="left:0.5px;top:792px" width="16" height="16" viewBox="0 0 16 16"><path d="M0 4.5 L4 0.8 H15.2 V11.6 L11.2 15.4 H0Z" fill="#2f72e0" stroke="#0a2a8a" stroke-width="1.1"/><path d="M0 4.5 H11.2 V15.4 H0Z" fill="#5aa2f6"/><path d="M0.5 12 L9 5.2 L11 5.2 V7.5 L3 15 H0.5Z" fill="#9ccaff" opacity=".8"/><path d="M0 4.5 H11.2 V15.4 M11.2 4.5 L15.2 0.8" fill="none" stroke="#0a2a8a" stroke-width="1.1"/><circle cx="5" cy="10.6" r="3.1" fill="#111"/><path d="M3.2 10.6 L4.6 12 L7 9" stroke="#fff" stroke-width="1.3" fill="none"/></svg>
<svg class="ic" style="left:22px;top:793.5px" width="15" height="15" viewBox="0 0 15 15"><path d="M13.4 1 V13.4 H1 Z" fill="#d6d6d6" stroke="#111" stroke-width="1"/><path d="M12.3 5 V12.3 H5" stroke="#fff" stroke-width="1" fill="none"/></svg>
<svg class="ic" style="left:0.5px;top:810px" width="16" height="16" viewBox="0 0 16 16"><path d="M0 4.5 L4 0.8 H15.2 V11.6 L11.2 15.4 H0Z" fill="#2f72e0" stroke="#0a2a8a" stroke-width="1.1"/><path d="M0 4.5 H11.2 V15.4 H0Z" fill="#5aa2f6"/><path d="M0.5 12 L9 5.2 L11 5.2 V7.5 L3 15 H0.5Z" fill="#9ccaff" opacity=".8"/><path d="M0 4.5 H11.2 V15.4 M11.2 4.5 L15.2 0.8" fill="none" stroke="#0a2a8a" stroke-width="1.1"/><circle cx="5" cy="10.6" r="3.1" fill="#111"/><path d="M3.2 10.6 L4.6 12 L7 9" stroke="#fff" stroke-width="1.3" fill="none"/></svg>
<svg class="ic" style="left:22px;top:811.5px" width="15" height="15" viewBox="0 0 15 15"><path d="M13.4 1 V13.4 H1 Z" fill="#d6d6d6" stroke="#111" stroke-width="1"/><path d="M12.3 5 V12.3 H5" stroke="#fff" stroke-width="1" fill="none"/></svg>
<svg class="ic" style="left:0.5px;top:828px" width="16" height="16" viewBox="0 0 16 16"><path d="M0 4.5 L4 0.8 H15.2 V11.6 L11.2 15.4 H0Z" fill="#2f72e0" stroke="#0a2a8a" stroke-width="1.1"/><path d="M0 4.5 H11.2 V15.4 H0Z" fill="#5aa2f6"/><path d="M0.5 12 L9 5.2 L11 5.2 V7.5 L3 15 H0.5Z" fill="#9ccaff" opacity=".8"/><path d="M0 4.5 H11.2 V15.4 M11.2 4.5 L15.2 0.8" fill="none" stroke="#0a2a8a" stroke-width="1.1"/><circle cx="5" cy="10.6" r="3.1" fill="#111"/><path d="M3.2 10.6 L4.6 12 L7 9" stroke="#fff" stroke-width="1.3" fill="none"/></svg>
<svg class="ic" style="left:22px;top:829.5px" width="15" height="15" viewBox="0 0 15 15"><path d="M13.4 1 V13.4 H1 Z" fill="#d6d6d6" stroke="#111" stroke-width="1"/><path d="M12.3 5 V12.3 H5" stroke="#fff" stroke-width="1" fill="none"/></svg>
<svg class="ic" style="left:0.5px;top:846px" width="16" height="16" viewBox="0 0 16 16"><path d="M0 4.5 L4 0.8 H15.2 V11.6 L11.2 15.4 H0Z" fill="#2f72e0" stroke="#0a2a8a" stroke-width="1.1"/><path d="M0 4.5 H11.2 V15.4 H0Z" fill="#5aa2f6"/><path d="M0.5 12 L9 5.2 L11 5.2 V7.5 L3 15 H0.5Z" fill="#9ccaff" opacity=".8"/><path d="M0 4.5 H11.2 V15.4 M11.2 4.5 L15.2 0.8" fill="none" stroke="#0a2a8a" stroke-width="1.1"/><circle cx="5" cy="10.6" r="3.1" fill="#111"/><path d="M3.2 10.6 L4.6 12 L7 9" stroke="#fff" stroke-width="1.3" fill="none"/></svg>
<svg class="ic" style="left:22px;top:847.5px" width="15" height="15" viewBox="0 0 15 15"><path d="M13.4 1 V13.4 H1 Z" fill="#d6d6d6" stroke="#111" stroke-width="1"/><path d="M12.3 5 V12.3 H5" stroke="#fff" stroke-width="1" fill="none"/></svg>
<svg class="ic" style="left:0.5px;top:557.5px" width="16" height="16" viewBox="0 0 16 16"><path d="M0 4.5 L4 0.8 H15.2 V11.6 L11.2 15.4 H0Z" fill="#2f72e0" stroke="#0a2a8a" stroke-width="1.1"/><path d="M0 4.5 H11.2 V15.4 H0Z" fill="#5aa2f6"/><path d="M0.5 12 L9 5.2 L11 5.2 V7.5 L3 15 H0.5Z" fill="#9ccaff" opacity=".8"/><path d="M0 4.5 H11.2 V15.4 M11.2 4.5 L15.2 0.8" fill="none" stroke="#0a2a8a" stroke-width="1.1"/><circle cx="5" cy="10.6" r="3.1" fill="#111"/><path d="M3.2 10.6 L4.6 12 L7 9" stroke="#fff" stroke-width="1.3" fill="none"/></svg>
<svg class="ic" style="left:0.5px;top:575.5px" width="16" height="16" viewBox="0 0 16 16"><path d="M0 4.5 L4 0.8 H15.2 V11.6 L11.2 15.4 H0Z" fill="#2f72e0" stroke="#0a2a8a" stroke-width="1.1"/><path d="M0 4.5 H11.2 V15.4 H0Z" fill="#5aa2f6"/><path d="M0.5 12 L9 5.2 L11 5.2 V7.5 L3 15 H0.5Z" fill="#9ccaff" opacity=".8"/><path d="M0 4.5 H11.2 V15.4 M11.2 4.5 L15.2 0.8" fill="none" stroke="#0a2a8a" stroke-width="1.1"/><circle cx="5" cy="10.6" r="3.1" fill="#111"/><path d="M3.2 10.6 L4.6 12 L7 9" stroke="#fff" stroke-width="1.3" fill="none"/></svg>
<div class="a" style="left:59px;top:526px;width:9px;height:39px;background:#ccffff;box-sizing:border-box;border:1px solid #000;border-left:none;"></div>
<div class="a" style="left:62px;top:534px;width:0;height:0;border-top:2.5px solid transparent;border-bottom:2.5px solid transparent;border-right:3.2px solid #333"></div>
<div class="a" style="left:62px;top:543px;width:0;height:0;border-top:2.5px solid transparent;border-bottom:2.5px solid transparent;border-right:3.2px solid #333"></div>
<div class="a" style="left:62px;top:552px;width:0;height:0;border-top:2.5px solid transparent;border-bottom:2.5px solid transparent;border-right:3.2px solid #333"></div>
<div class="t" style="left:73px;top:986px;font-family:'Liberation Serif','Noto Serif CJK SC',serif;font-weight:900;font-size:13px;letter-spacing:1px;line-height:15px;height:15px">*等轴测</div>
<div class="a" style="left:0px;top:1003px;width:1527px;height:1px;background:#000;"></div>
<div class="a" style="left:0px;top:1004px;width:1527px;height:14px;background:#ccffff;"></div>
<div class="a" style="left:0px;top:1004px;width:19px;height:12px;background:#cccccc;"></div>
<div class="a" style="left:19px;top:1004px;width:10px;height:12px;background:#999999;"></div>
<div class="a" style="left:0px;top:1016px;width:30px;height:1px;background:#000;"></div>
<div class="a" style="left:29px;top:1004px;width:1px;height:13px;background:#000;"></div>
<div class="a" style="left:30px;top:1004px;width:2px;height:14px;background:#cccccc;"></div>
<div class="a" style="left:0px;top:1017px;width:30px;height:1px;background:#ccc;"></div>
<div class="t" style="left:-7px;top:1003px;font-size:12px;line-height:13px;height:13px">例<span style="font-family:'Liberation Serif',serif;font-size:13px;margin-left:2px">1</span></div>
<div class="a" style="left:0px;top:1018px;width:1527px;height:1px;background:#000;"></div>
<div class="a" style="left:0px;top:1019px;width:1527px;height:18px;background:#cccccc;"></div>
<div class="t" style="left:1465px;top:1022px;font-size:12.5px;">在编辑 装配体</div>
<div class="a" style="left:0px;top:1037px;width:1527px;height:1px;background:#1a1a3a;"></div>
<div class="a" style="left:0;top:1038px;width:1527px;height:21px;background:linear-gradient(90deg,#6699cc 0,#6699cc 320px,#3399cc 420px,#3399cc 862px,#3366cc 868px,#3366cc 1205px,#336699 1207px,#336699 1320px,#006699 1321px,#006699 1333px,#003399 1334px,#003380 1527px)"></div>
<div class="a" style="left:1334px;top:1043px;width:193px;height:16px;background:#003366;"></div>
<div class="a" style="left:864px;top:1040px;width:343px;height:1px;background:#3366cc;"></div>
<svg class="a" style="left:0;top:1038px" width="1527" height="21" viewBox="0 1038 1527 21"><path d="M1040 1040 L1060 1040 L1095 1059 L1072 1059Z" fill="#6699cc"/><path d="M1058 1040 L1080 1040 L1118 1059 L1093 1059Z" fill="#99ccff"/><path d="M1084 1040 L1092 1040 L1128 1059 L1118 1059Z" fill="#6699cc"/><path d="M490 1059 L540 1048 L545 1051 L510 1059Z" fill="#6699cc"/><path d="M865 1059 Q866 1046 872 1044 L960 1040 L1207 1039 L1207 1038 L864 1038Z" fill="#3399cc" opacity="0"/></svg>
<div class="a" style="left:1px;top:1038px;width:58px;height:21px;border-radius:3px 3px 0 0;overflow:hidden;background:linear-gradient(168deg,#ffffff 0,#ccffff 5%,#ccccff 12%,#ccccff 22%,#99ccff 30%,#99ccff 56%,#66cccc 63%,#66cccc 100%)"><svg width="58" height="21"><rect x="15.5" y="6.5" width="27" height="16" fill="#fff" stroke="#ccc"/><rect x="18" y="9" width="22" height="13" fill="#ddd"/><path d="M20 16 L26 9 H37 L27 21 H22Z" fill="#ff6633"/><path d="M35 9.5 L38 9.5 L37 15 L32 14Z" fill="#ddcc33"/><path d="M27 21 Q28 14 34 14.5 Q39 15 39 21" fill="none" stroke="#999" stroke-width="3"/></svg></div>
<div class="a" style="left:59px;top:1038px;width:1px;height:21px;background:#336699;"></div>
<div class="a" style="left:60px;top:1038px;width:2px;height:21px;background:#6699cc;"></div>
<div class="a" style="left:62px;top:1038px;width:1px;height:21px;background:#003333;"></div>
<div class="a" style="left:63px;top:1038px;width:58px;height:21px;border-radius:3px 3px 0 0;overflow:hidden;background:linear-gradient(168deg,#ffffff 0,#ccffff 5%,#ccccff 12%,#ccccff 22%,#99ccff 30%,#99ccff 56%,#66cccc 63%,#66cccc 100%)"><svg width="58" height="21"><rect x="13" y="4" width="30" height="18" fill="#fff"/><rect x="15" y="6" width="16" height="16" fill="#339988"/><path d="M17 22 L22 8 H25 L30 22 H26.5 L23.5 12 L20.5 22Z" fill="#cfeee8"/><rect x="33" y="6" width="5" height="16" fill="#339988"/><rect x="40" y="6" width="2" height="16" fill="#66bbaa"/></svg></div>
<div class="a" style="left:121px;top:1038px;width:1px;height:21px;background:#336699;"></div>
<div class="a" style="left:122px;top:1038px;width:2px;height:21px;background:#6699cc;"></div>
<div class="a" style="left:124px;top:1038px;width:1px;height:21px;background:#003333;"></div>
<div class="a" style="left:125px;top:1038px;width:50px;height:21px;border-radius:3px 3px 0 0;overflow:hidden;background:linear-gradient(168deg,#ffffff 0,#ccffff 5%,#ccccff 12%,#ccccff 22%,#99ccff 30%,#99ccff 56%,#66cccc 63%,#66cccc 100%)"><svg width="50" height="21"><path d="M9 7.7 L24.4 3.1 L39.7 7.2 L24.4 11.6Z" fill="#ff2a2a"/><path d="M9 7.7 L24.4 3.1 L30 4.6 L14 9Z" fill="#ff7070"/><path d="M9 7.7 L24.4 11.6 V22 H9Z" fill="#f00000"/><path d="M24.4 11.6 L39.7 7.2 V22 H24.4Z" fill="#8a0000"/><text x="11.5" y="23.5" font-family="Liberation Sans,sans-serif" font-weight="bold" font-size="17" fill="#fff" transform="rotate(14 11.5 23.5)">S</text><text x="25.2" y="27.5" font-family="Liberation Sans,sans-serif" font-weight="bold" font-size="17" fill="#fff" transform="rotate(-16 25.2 27.5)" textLength="13.5" lengthAdjust="spacingAndGlyphs">W</text></svg></div>
<div class="a" style="left:175px;top:1038px;width:2px;height:21px;background:#336666;"></div>
<div class="a" style="left:177px;top:1038px;width:1.5px;height:21px;background:#ccccff;"></div>
<div class="a" style="left:178.5px;top:1038px;width:1px;height:21px;background:#336666;"></div>
<div class="a" style="left:179.5px;top:1038px;width:2.5px;height:21px;background:#66cccc;"></div>
<div class="a" style="left:182px;top:1038px;width:1px;height:21px;background:#336699;"></div>
<div class="a" style="left:183px;top:1038px;width:3px;height:21px;background:#66cccc;"></div>
<div class="a" style="left:186px;top:1038px;width:1px;height:21px;background:#336666;"></div>
<div class="a" style="left:187px;top:1038px;width:58px;height:21px;border-radius:3px 3px 0 0;overflow:hidden;background:linear-gradient(168deg,#ffffff 0,#ccffff 5%,#ccccff 12%,#ccccff 22%,#99ccff 30%,#99ccff 56%,#66cccc 63%,#66cccc 100%)"><svg width="59" height="21"><path d="M20 5 H34 L40 10 V22 H20Z" fill="#ddddff" stroke="#bbbbee"/><path d="M34 5 V10 H40Z" fill="#fff"/><circle cx="31" cy="18" r="7.5" fill="#ccddff" stroke="#99aadd" stroke-width="1.5"/><circle cx="31" cy="18" r="4" fill="#ddeeff"/></svg></div>
<div class="a" style="left:245px;top:1038px;width:1px;height:21px;background:#336699;"></div>
<div class="a" style="left:246px;top:1038px;width:2px;height:21px;background:#6699cc;"></div>
<div class="a" style="left:248px;top:1038px;width:1px;height:21px;background:#003333;"></div>
<div class="a" style="left:249px;top:1038px;width:58px;height:21px;border-radius:3px 3px 0 0;overflow:hidden;background:linear-gradient(115deg,#ccffff 0,#ccffff 48%,#ccccff 60%,#ccccff 100%)"><svg width="58" height="21"><rect x="13" y="9" width="23" height="13" fill="#fff"/><rect x="13" y="9" width="23" height="5" fill="#111"/><rect x="14.3" y="10.2" width="3" height="2.8" fill="#ddd"/><rect x="19" y="10" width="16" height="3.2" fill="#00dddd"/><text x="19.6" y="13" font-family="Liberation Sans,sans-serif" font-size="3.6" font-weight="bold" fill="#000" textLength="10">FILE</text><path d="M14 18.5 Q16 15 19 17 T24 18 T31 17 M14 21 H34" stroke="#111" stroke-width="1.8" fill="none"/><rect x="35.4" y="4.4" width="9" height="18" fill="#fff" stroke="#111"/><rect x="35.4" y="4.4" width="9" height="2.4" fill="#00bbbb" stroke="#111" stroke-width=".6"/><rect x="37" y="9.5" width="2.6" height="2.6" fill="#fff" stroke="#111" stroke-width=".9"/><rect x="37" y="14" width="2.6" height="2.6" fill="#fff" stroke="#111" stroke-width=".9"/><path d="M41 9 h2 M41 11.5 h2 M41 14.5 h2 M37 19.5 h6" stroke="#111" stroke-width="1.2"/></svg></div>
<div class="a" style="left:307px;top:1038px;width:1px;height:21px;background:#99ccff;"></div>
<div class="t" style="left:1344px;top:1048px;height:11px;overflow:hidden;line-height:14px"><span style="font-family:'Liberation Mono',monospace;font-size:13px;color:#fff;">CH</span></div>
<svg class="a" style="left:1360px;top:1046px" width="167" height="13" viewBox="1360 1046 167 13"><path d="M1367 1052 Q1372 1047 1376 1050 L1379 1048" stroke="#ddd" stroke-width="1.2" fill="none"/><rect x="1366" y="1053" width="14" height="7" fill="#999" stroke="#ddd"/><circle cx="1401" cy="1059" r="7" fill="#ffcc66"/><path d="M1401 1052 V1060 M1394 1058 H1408" stroke="#cc0000" stroke-width="2"/><path d="M1394 1059 A7 7 0 0 1 1401 1052" stroke="#fff" stroke-width="1.5" fill="none"/><rect x="1419" y="1050" width="10" height="10" fill="#ccccff" stroke="#99ccff"/><circle cx="1425" cy="1057" r="4" fill="#99bbee" stroke="#ddeeff"/><rect x="1443" y="1050" width="6" height="4" fill="#ddd"/><rect x="1441" y="1054" width="10" height="6" fill="#888"/><circle cx="1453" cy="1059" r="3" fill="#22bb22"/><path d="M1465 1052 L1470 1050 L1475 1052 V1060 H1465Z" fill="#cc1111"/><text x="1465.5" y="1059" font-family="Liberation Sans,sans-serif" font-weight="bold" font-size="6" fill="#fff">SW</text><path d="M1474 1059 L1478 1055" stroke="#22cc22" stroke-width="2"/><circle cx="1497" cy="1059" r="7.5" fill="#fff"/><path d="M1493 1060 L1497 1052 L1501 1060" stroke="#1144cc" stroke-width="2.4" fill="none"/><circle cx="1524" cy="1060" r="8" fill="#ddd"/><path d="M1518 1060 Q1520 1054 1527 1056" stroke="#888" stroke-width="2" fill="none"/></svg>
<div class="a" style="left:0px;top:1059px;width:1527px;height:1px;background:#000;"></div>
<div class="a" style="left:1501px;top:25px;width:40px;height:426px;background:#cccccc;border-radius:0 0 0 14px"></div>
<div class="a" style="left:1508px;top:1px;width:40px;height:442px;background:#999999;border-radius:0 0 0 9px"></div>
<div class="a" style="left:1511.5px;top:1px;width:40px;height:435px;background:#222;border-radius:0 0 0 7px"></div>
<div class="a" style="left:1513px;top:1px;width:40px;height:432px;background:#fff;border-radius:0 0 0 6px"></div>
<div class="a" style="left:1514px;top:2px;width:40px;height:430px;background:linear-gradient(180deg,#ccccff 0,#ccccff 83px,#cccccc 83px,#cccccc 87px,#ccccff 87px,#ccccff 92px,#ccffff 92px,#ccffff 108px,#ffffff 108px,#ffffff 122px,#ccccff 122px,#ccccff 126px,#99ccff 127px,#99ccff 100%);border-radius:0 0 0 5px"></div>
<div class="a" style="left:1514px;top:20px;width:13px;height:6px;background:#cccccc;"></div>
<div class="a" style="left:1519px;top:26px;width:8px;height:402px;background:#777;"></div>
<div class="a" style="left:1520px;top:27px;width:7px;height:400px;background:#fff;"></div>
<div class="a" style="left:1518px;top:27px;width:1px;height:400px;background:#fff;"></div>
<div class="a" style="left:1520px;top:34px;width:7px;height:10px;background:#ccccff;"></div>
<div class="a" style="left:1520px;top:33px;width:7px;height:1px;background:#ccffff;"></div>
<div class="a" style="left:1520px;top:44px;width:7px;height:1px;background:#ccffff;"></div>
<div class="a" style="left:1520px;top:7px;width:6px;height:11px;background:#fff;box-sizing:border-box;border:1px solid #000;border-right:none"></div>
<div class="a" style="left:1523px;top:7px;width:3px;height:2px;background:#009999;"></div>
<div class="t" style="left:1521px;top:6px;line-height:12px"><b style="font-size:9px">G</b></div>
<div class="a" style="left:1524px;top:52px;width:3px;height:2px;background:#111;"></div>
<div class="a" style="left:1524px;top:73px;width:3px;height:2px;background:#111;"></div>
<div class="a" style="left:1524px;top:108px;width:3px;height:3px;background:#111;"></div>
<div class="a" style="left:1524px;top:137px;width:3px;height:1px;background:#111;"></div>
<div class="a" style="left:1524px;top:150px;width:3px;height:2px;background:#111;"></div>
<div class="a" style="left:1524px;top:158px;width:3px;height:2px;background:#111;"></div>
<div class="a" style="left:1524px;top:212px;width:3px;height:1px;background:#111;"></div>
<div class="a" style="left:1524px;top:265px;width:3px;height:2px;background:#111;"></div>
<div class="a" style="left:1524px;top:418px;width:3px;height:2px;background:#111;"></div>
<div class="a" style="left:1520px;top:80px;width:1px;height:20px;background:#aaa;"></div>
<div class="a" style="left:1520px;top:100px;width:2px;height:1px;background:#aaa;"></div>
<div class="a" style="left:1522px;top:178px;width:1px;height:20px;background:#aaa;"></div>
<div class="a" style="left:1521px;top:236px;width:1px;height:22px;background:#aaa;"></div>
<div class="a" style="left:1501px;top:25px;width:11px;height:1px;background:#444;"></div>
<div class="a" style="left:1501px;top:26px;width:11px;height:1px;background:#eeeeee;"></div>
<div class="a" style="left:1501px;top:56px;width:11px;height:1px;background:#8a8a8a;"></div>
<div class="a" style="left:1501px;top:87px;width:11px;height:1px;background:#7777aa;"></div>
<div class="a" style="left:1501px;top:88px;width:11px;height:1px;background:#000;"></div>
<div class="a" style="left:1501px;top:23px;width:11px;height:1px;background:#000;"></div>
<div class="a" style="left:1526px;top:1px;width:1px;height:1058px;background:#000;"></div>
<div class="a" style="left:0px;top:0px;width:1px;height:1060px;background:#000;"></div>
</body></html>
